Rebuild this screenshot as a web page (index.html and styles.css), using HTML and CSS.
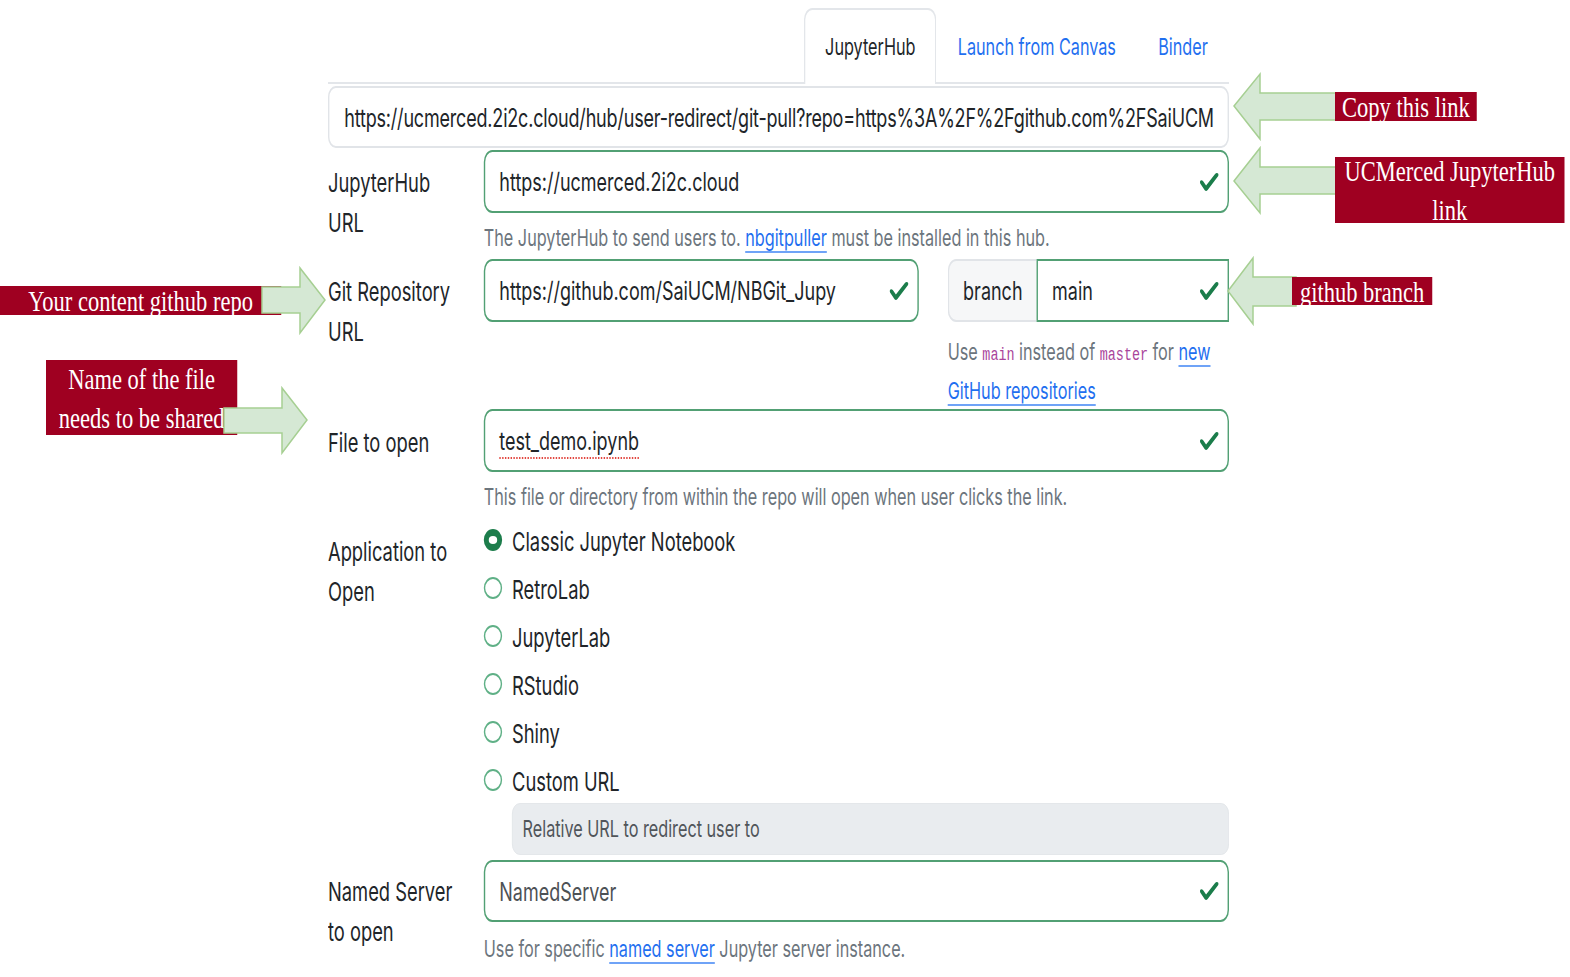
FILE: index.html
```html
<!DOCTYPE html>
<html lang="en">
<head>
<meta charset="utf-8">
<title>nbgitpuller link generator</title>
<link rel="stylesheet" href="styles.css">
</head>
<body>
<div class="page">
  <nav class="tabs">
    <div class="tab active">JupyterHub</div>
    <a class="tab">Launch from Canvas</a>
    <a class="tab">Binder</a>
  </nav>

  <div class="linkbox"><div class="clip">https://ucmerced.2i2c.cloud/hub/user-redirect/git-pull?repo=https%3A%2F%2Fgithub.com%2FSaiUCM</div></div>

  <div class="row r1">
    <div class="label">JupyterHub<br>URL</div>
    <div class="field">
      <div class="input"><span class="val">https://ucmerced.2i2c.cloud</span><svg class="check" viewBox="0 0 8 8" preserveAspectRatio="none"><path d="M2.3 6.73.6 4.53c-.4-1.04.46-1.4 1.1-.8l1.1 1.4 3.4-3.8c.6-.63 1.6-.27 1.2.7l-4 4.6c-.43.5-.8.4-1.1.1z"/></svg></div>
      <div class="help">The JupyterHub to send users to. <a>nbgitpuller</a> must be installed in this hub.</div>
    </div>
  </div>

  <div class="row r2">
    <div class="label">Git Repository<br>URL</div>
    <div class="field git">
      <div class="input repo"><span class="val">https://github.com/SaiUCM/NBGit_Jupy</span><svg class="check" viewBox="0 0 8 8" preserveAspectRatio="none"><path d="M2.3 6.73.6 4.53c-.4-1.04.46-1.4 1.1-.8l1.1 1.4 3.4-3.8c.6-.63 1.6-.27 1.2.7l-4 4.6c-.43.5-.8.4-1.1.1z"/></svg></div>
      <div class="branchcol">
        <div class="group">
          <div class="addon">branch</div>
          <div class="input branch"><span class="val">main</span><svg class="check" viewBox="0 0 8 8" preserveAspectRatio="none"><path d="M2.3 6.73.6 4.53c-.4-1.04.46-1.4 1.1-.8l1.1 1.4 3.4-3.8c.6-.63 1.6-.27 1.2.7l-4 4.6c-.43.5-.8.4-1.1.1z"/></svg></div>
        </div>
        <div class="help bhelp">Use <code>main</code> instead of <code>master</code> for <a>new<br>GitHub repositories</a></div>
      </div>
    </div>
  </div>

  <div class="row r3">
    <div class="label">File to open</div>
    <div class="field">
      <div class="input"><span class="val spell">test_demo.ipynb</span><svg class="check" viewBox="0 0 8 8" preserveAspectRatio="none"><path d="M2.3 6.73.6 4.53c-.4-1.04.46-1.4 1.1-.8l1.1 1.4 3.4-3.8c.6-.63 1.6-.27 1.2.7l-4 4.6c-.43.5-.8.4-1.1.1z"/></svg></div>
      <div class="help">This file or directory from within the repo will open when user clicks the link.</div>
    </div>
  </div>

  <div class="row r4">
    <div class="label">Application to<br>Open</div>
    <div class="field">
      <div class="radio"><span class="dot on"></span>Classic Jupyter Notebook</div>
      <div class="radio"><span class="dot"></span>RetroLab</div>
      <div class="radio"><span class="dot"></span>JupyterLab</div>
      <div class="radio"><span class="dot"></span>RStudio</div>
      <div class="radio"><span class="dot"></span>Shiny</div>
      <div class="radio"><span class="dot"></span>Custom URL</div>
      <div class="custom">Relative URL to redirect user to</div>
    </div>
  </div>

  <div class="row r5">
    <div class="label">Named Server<br>to open</div>
    <div class="field">
      <div class="input"><span class="val grey">NamedServer</span><svg class="check" viewBox="0 0 8 8" preserveAspectRatio="none"><path d="M2.3 6.73.6 4.53c-.4-1.04.46-1.4 1.1-.8l1.1 1.4 3.4-3.8c.6-.63 1.6-.27 1.2.7l-4 4.6c-.43.5-.8.4-1.1.1z"/></svg></div>
      <div class="help">Use for specific <a>named server</a> Jupyter server instance.</div>
    </div>
  </div>
</div>

<div class="note n-repo">Your content github repo</div>
<div class="note n-file">Name of the file<br>needs to be shared</div>

<svg class="arrows" width="1570" height="977" viewBox="0 0 1570 977">
  <polygon points="1234,106 1260,74 1260,93 1338,93 1338,120 1260,120 1260,139"/>
  <polygon points="1234,181 1260,148 1260,167 1340,167 1340,194 1260,194 1260,213"/>
  <polygon points="1228,291 1253,258 1253,277 1296,277 1296,306 1253,306 1253,324"/>
  <polygon points="262,287 300,287 300,268 325,300 300,333 300,313 262,313"/>
  <polygon points="224,408 282,408 282,388 307,420 282,453 282,433 224,433"/>
</svg>

<div class="note n-copy">Copy this link</div>
<div class="note n-hub">UCMerced JupyterHub<br>link</div>
<div class="note n-branch">github branch</div>
</body>
</html>
```
FILE: styles.css
```css
/* The reference is a screenshot squeezed horizontally; the form is laid
   out at its natural width and compressed with one scaleX. */
html, body {
  margin: 0;
  padding: 0;
}
body {
  position: relative;
  width: 1570px;
  height: 977px;
  overflow: hidden;
  background: #ffffff;
  color: #212529;
  font-family: "Inter", "Noto Sans", "Liberation Sans", sans-serif;
}
.page {
  margin-left: 328px;
  width: 1278px;
  padding-top: 8px;
  transform: scaleX(0.705);
  transform-origin: 0 0;
}

/* tabs */
.tabs {
  display: flex;
  justify-content: flex-end;
  height: 74px;
  border-bottom: 2px solid #e3e6ea;
}
.tab {
  display: flex;
  align-items: center;
  padding: 0 28px;
  font-size: 23px;
  color: #1f6ff0;
  border: 2px solid transparent;
  border-bottom: none;
  border-radius: 12px 12px 0 0;
  margin-bottom: -2px;
}
.tab.active {
  color: #212529;
  background: #fff;
  border-color: #e3e6ea;
}

/* copy link */
.linkbox {
  box-sizing: border-box;
  margin-top: 2px;
  height: 62px;
  border: 2px solid #e1e4e8;
  border-radius: 11px;
  display: flex;
  align-items: center;
  padding: 0 18px 0 21px;
}
.clip {
  flex: 1;
  min-width: 0;
  overflow: hidden;
  white-space: nowrap;
  font-size: 25.5px;
  letter-spacing: -0.25px;
}

/* rows */
.row {
  display: flex;
}
.r1 { margin-top: 2px; }
.r2 { margin-top: 1px; }
.r3 { margin-top: -2px; }
.r5 { margin-top: 5px; }
.label {
  flex: 0 0 221px;
  font-size: 26px;
  line-height: 40px;
  padding-top: 13px;
  white-space: nowrap;
}
.r3 .label { padding-top: 14px; }
.r4 .label { padding-top: 15px; }
.r5 .label { padding-top: 12px; }
.field {
  flex: 1;
  min-width: 0;
}
.input {
  box-sizing: border-box;
  height: 63px;
  border: 2px solid #52a074;
  border-radius: 12px;
  display: flex;
  align-items: center;
  justify-content: space-between;
  padding: 0 11px 0 20px;
  font-size: 25.5px;
  white-space: nowrap;
}
.r5 .input { height: 62px; }
.check {
  width: 30px;
  height: 24px;
  fill: #1b7d4b;
  flex: none;
}
.spell {
  text-decoration: underline dotted #e2463f 2px;
  text-underline-offset: 7px;
}
.grey { color: #4d5155; }
.help {
  margin-top: 6px;
  font-size: 23px;
  line-height: 39px;
  color: #6c757d;
  white-space: nowrap;
}
.r5 .help { margin-top: 8px; }
.help a {
  color: #1f6ff0;
  text-decoration: underline;
  text-decoration-color: #6fa3f7;
  text-decoration-thickness: 2px;
  text-underline-offset: 5px;
}
code {
  font-family: "Liberation Mono", "DejaVu Sans Mono", monospace;
  font-size: 19px;
  line-height: 1;
  color: #a9449b;
}

/* git row */
.git {
  display: flex;
  gap: 41px;
}
.repo {
  flex: 0 0 617px;
}
.branchcol {
  flex: 1;
  min-width: 0;
}
.group {
  display: flex;
  height: 63px;
}
.addon {
  box-sizing: border-box;
  flex: 0 0 126px;
  display: flex;
  align-items: center;
  justify-content: center;
  background: #f6f7f8;
  border: 2px solid #e1e4e8;
  border-right: none;
  border-radius: 12px 0 0 12px;
  font-size: 25.5px;
}
.branch {
  flex: 1;
  border-radius: 0;
  padding-left: 20px;
}
.bhelp { margin-top: 11px; }

/* radios */
.radio {
  height: 48px;
  display: flex;
  align-items: center;
  font-size: 26px;
  white-space: nowrap;
}
.dot {
  box-sizing: border-box;
  flex: none;
  width: 26px;
  height: 22px;
  border: 2px solid #5fb086;
  border-radius: 50%;
  margin-right: 14px;
  margin-top: -3px;
}
.dot.on {
  border: 7px solid #1d7d4c;
}
.custom {
  box-sizing: border-box;
  margin: -2px 0 0 40px;
  height: 52px;
  background: #e9ecef;
  border: 1px solid #e1e4e8;
  border-radius: 11px;
  display: flex;
  align-items: center;
  padding-left: 14px;
  font-size: 23px;
  color: #50555a;
}

/* annotations (overlays on the screenshot) */
.arrows {
  position: absolute;
  left: 0;
  top: 0;
  pointer-events: none;
}
.arrows polygon {
  fill: #d5e8d4;
  stroke: #a6cf92;
  stroke-width: 1.5;
}
.note {
  position: absolute;
  box-sizing: border-box;
  display: flex;
  align-items: center;
  justify-content: center;
  text-align: center;
  white-space: nowrap;
  background: #9f0021;
  color: #ffffff;
  font-family: "Liberation Serif", "Times New Roman", serif;
  font-size: 30px;
  line-height: 29px;
  transform: scaleX(0.75);
  transform-origin: 0 0;
}
.n-copy { left: 1335px; top: 92px; width: 189px; height: 29px; }
.n-hub { left: 1335px; top: 157px; width: 306px; height: 66px; line-height: 39px; }
.n-branch { left: 1292px; top: 277px; width: 187px; height: 28px; }
.n-repo { left: 0; top: 286px; width: 375px; height: 29px; }
.n-file { left: 46px; top: 360px; width: 255px; height: 75px; line-height: 39px; }
```
